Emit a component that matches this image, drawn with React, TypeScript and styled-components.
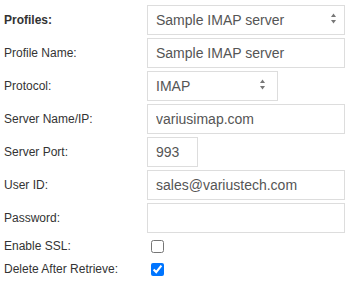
import React from 'react';
import styled, { createGlobalStyle } from 'styled-components';

const GlobalStyle = createGlobalStyle`
  html, body {
    margin: 0;
    padding: 0;
    background: #ffffff;
  }
  body {
    font-family: "Liberation Sans", Arial, sans-serif;
  }
`;

const Form = styled.form`
  display: grid;
  grid-template-columns: 143px 198px;
  row-gap: 3px;
  padding: 5px 0 0 4px;
`;

const Label = styled.label<{ $bold?: boolean }>`
  display: flex;
  align-items: center;
  font-size: 12px;
  color: #333333;
  font-weight: ${({ $bold }) => ($bold ? 700 : 400)};
  min-height: 20px;
`;

const Field = styled.div`
  display: flex;
  align-items: center;
`;

const TextInput = styled.input<{ $width?: number }>`
  box-sizing: border-box;
  width: ${({ $width }) => ($width ? `${$width}px` : '100%')};
  height: 30px;
  margin: 0;
  padding: 0 8px;
  border: 1px solid #dddddd;
  border-radius: 0;
  background: #ffffff;
  font-family: "Liberation Sans", Arial, sans-serif;
  font-size: 14px;
  color: #555555;
  outline: none;
`;

const SelectWrap = styled.div<{ $width?: number }>`
  position: relative;
  width: ${({ $width }) => ($width ? `${$width}px` : '100%')};
`;

const Select = styled.select`
  box-sizing: border-box;
  width: 100%;
  height: 30px;
  margin: 0;
  padding: 0 24px 0 8px;
  border: 1px solid #dddddd;
  border-radius: 0;
  background: #ffffff;
  appearance: none;
  -webkit-appearance: none;
  font-family: "Liberation Sans", Arial, sans-serif;
  font-size: 14px;
  color: #555555;
  outline: none;
`;

const Arrows = styled.svg<{ $right: number }>`
  position: absolute;
  top: 8px;
  right: ${({ $right }) => $right}px;
  pointer-events: none;
`;

const Check = styled.input`
  width: 13px;
  height: 13px;
  margin: 3px 3px 3px 4px;
  accent-color: #0075ff;
`;

const SortArrows = ({ right }: { right: number }) => (
  <Arrows $right={right} width="5" height="11" viewBox="0 0 5 11">
    <path d="M2.5 0.5 L5 4 L0 4 Z" fill="#777777" />
    <path d="M0 7 L5 7 L2.5 10.5 Z" fill="#777777" />
  </Arrows>
);

export default function App() {
  return (
    <>
      <GlobalStyle />
      <Form>
        <Label $bold>Profiles:</Label>
        <SelectWrap>
          <Select defaultValue="sample">
            <option value="sample">Sample IMAP server</option>
          </Select>
          <SortArrows right={9} />
        </SelectWrap>

        <Label>Profile Name:</Label>
        <TextInput type="text" defaultValue="Sample IMAP server" />

        <Label>Protocol:</Label>
        <SelectWrap $width={131}>
          <Select defaultValue="imap">
            <option value="imap">IMAP</option>
            <option value="pop3">POP3</option>
          </Select>
          <SortArrows right={13} />
        </SelectWrap>

        <Label>Server Name/IP:</Label>
        <TextInput type="text" defaultValue="variusimap.com" />

        <Label>Server Port:</Label>
        <TextInput type="text" $width={51} defaultValue="993" />

        <Label>User ID:</Label>
        <TextInput type="text" defaultValue="sales@variustech.com" />

        <Label>Password:</Label>
        <TextInput type="password" defaultValue="" />

        <Label>Enable SSL:</Label>
        <Field>
          <Check type="checkbox" />
        </Field>

        <Label>Delete After Retrieve:</Label>
        <Field>
          <Check type="checkbox" defaultChecked />
        </Field>
      </Form>
    </>
  );
}
